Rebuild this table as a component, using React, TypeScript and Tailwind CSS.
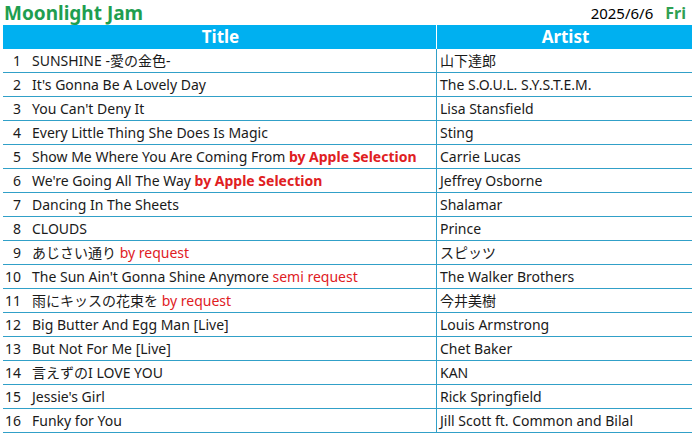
import React from "react";

type Row = { n: number; title: string; note?: string; bold?: boolean; artist: string };

const rows: Row[] = [
  { n: 1, title: "SUNSHINE -愛の金色-", artist: "山下達郎" },
  { n: 2, title: "It's Gonna Be A Lovely Day", artist: "The S.O.U.L. S.Y.S.T.E.M." },
  { n: 3, title: "You Can't Deny It", artist: "Lisa Stansfield" },
  { n: 4, title: "Every Little Thing She Does Is Magic", artist: "Sting" },
  { n: 5, title: "Show Me Where You Are Coming From", note: "by Apple Selection", bold: true, artist: "Carrie Lucas" },
  { n: 6, title: "We're Going All The Way", note: "by Apple Selection", bold: true, artist: "Jeffrey Osborne" },
  { n: 7, title: "Dancing In The Sheets", artist: "Shalamar" },
  { n: 8, title: "CLOUDS", artist: "Prince" },
  { n: 9, title: "あじさい通り", note: "by request", artist: "スピッツ" },
  { n: 10, title: "The Sun Ain't Gonna Shine Anymore", note: "semi request", artist: "The Walker Brothers" },
  { n: 11, title: "雨にキッスの花束を", note: "by request", artist: "今井美樹" },
  { n: 12, title: "Big Butter And Egg Man [Live]", artist: "Louis Armstrong" },
  { n: 13, title: "But Not For Me [Live]", artist: "Chet Baker" },
  { n: 14, title: "言えずのI LOVE YOU", artist: "KAN" },
  { n: 15, title: "Jessie's Girl", artist: "Rick Springfield" },
  { n: 16, title: "Funky for You", artist: "Jill Scott ft. Common and Bilal" },
];

export default function App() {
  return (
    <div
      className="w-[697px] h-[437px] bg-white overflow-hidden text-[#1a1a1a]"
      style={{ fontFamily: '"Noto Sans", "Noto Sans CJK JP", sans-serif' }}
    >
      <div className="flex items-end h-[25px] pl-[4px] pr-[11px]">
        <div className="text-[19px] font-bold text-[#1e9e50] leading-[22px] pb-[1px]">Moonlight Jam</div>
        <div className="ml-auto flex items-end leading-[20px] pb-[2px]">
          <span className="text-[15px] text-black">2025/6/6</span>
          <span className="text-[16px] font-bold text-[#2fa052] ml-[12px]">Fri</span>
        </div>
      </div>
      <div className="ml-[3px] w-[689px]">
        <div className="flex h-[24px] bg-[#00b0f0] text-white font-bold text-[17px] leading-[24px]">
          <div className="w-[433px] text-center pl-[2px]">Title</div>
          <div className="w-[1px] bg-white" />
          <div className="flex-1 text-center pl-[2px]">Artist</div>
        </div>
        {rows.map((r) => (
          <div key={r.n} className="flex h-[24px] border-b border-[#31a0c8] text-[14px] leading-[23px]">
            <div className="w-[433px] flex whitespace-nowrap">
              <span className="w-[18px] text-right">{r.n}</span>
              <span className="ml-[11px]">
                {r.title}
                {r.note && (
                  <span className={"text-[#e0201f]" + (r.bold ? " font-bold" : "")}> {r.note}</span>
                )}
              </span>
            </div>
            <div className="w-[1px] bg-[#31a0c8]" />
            <div className="flex-1 pl-[3px] whitespace-nowrap">{r.artist}</div>
          </div>
        ))}
      </div>
    </div>
  );
}
